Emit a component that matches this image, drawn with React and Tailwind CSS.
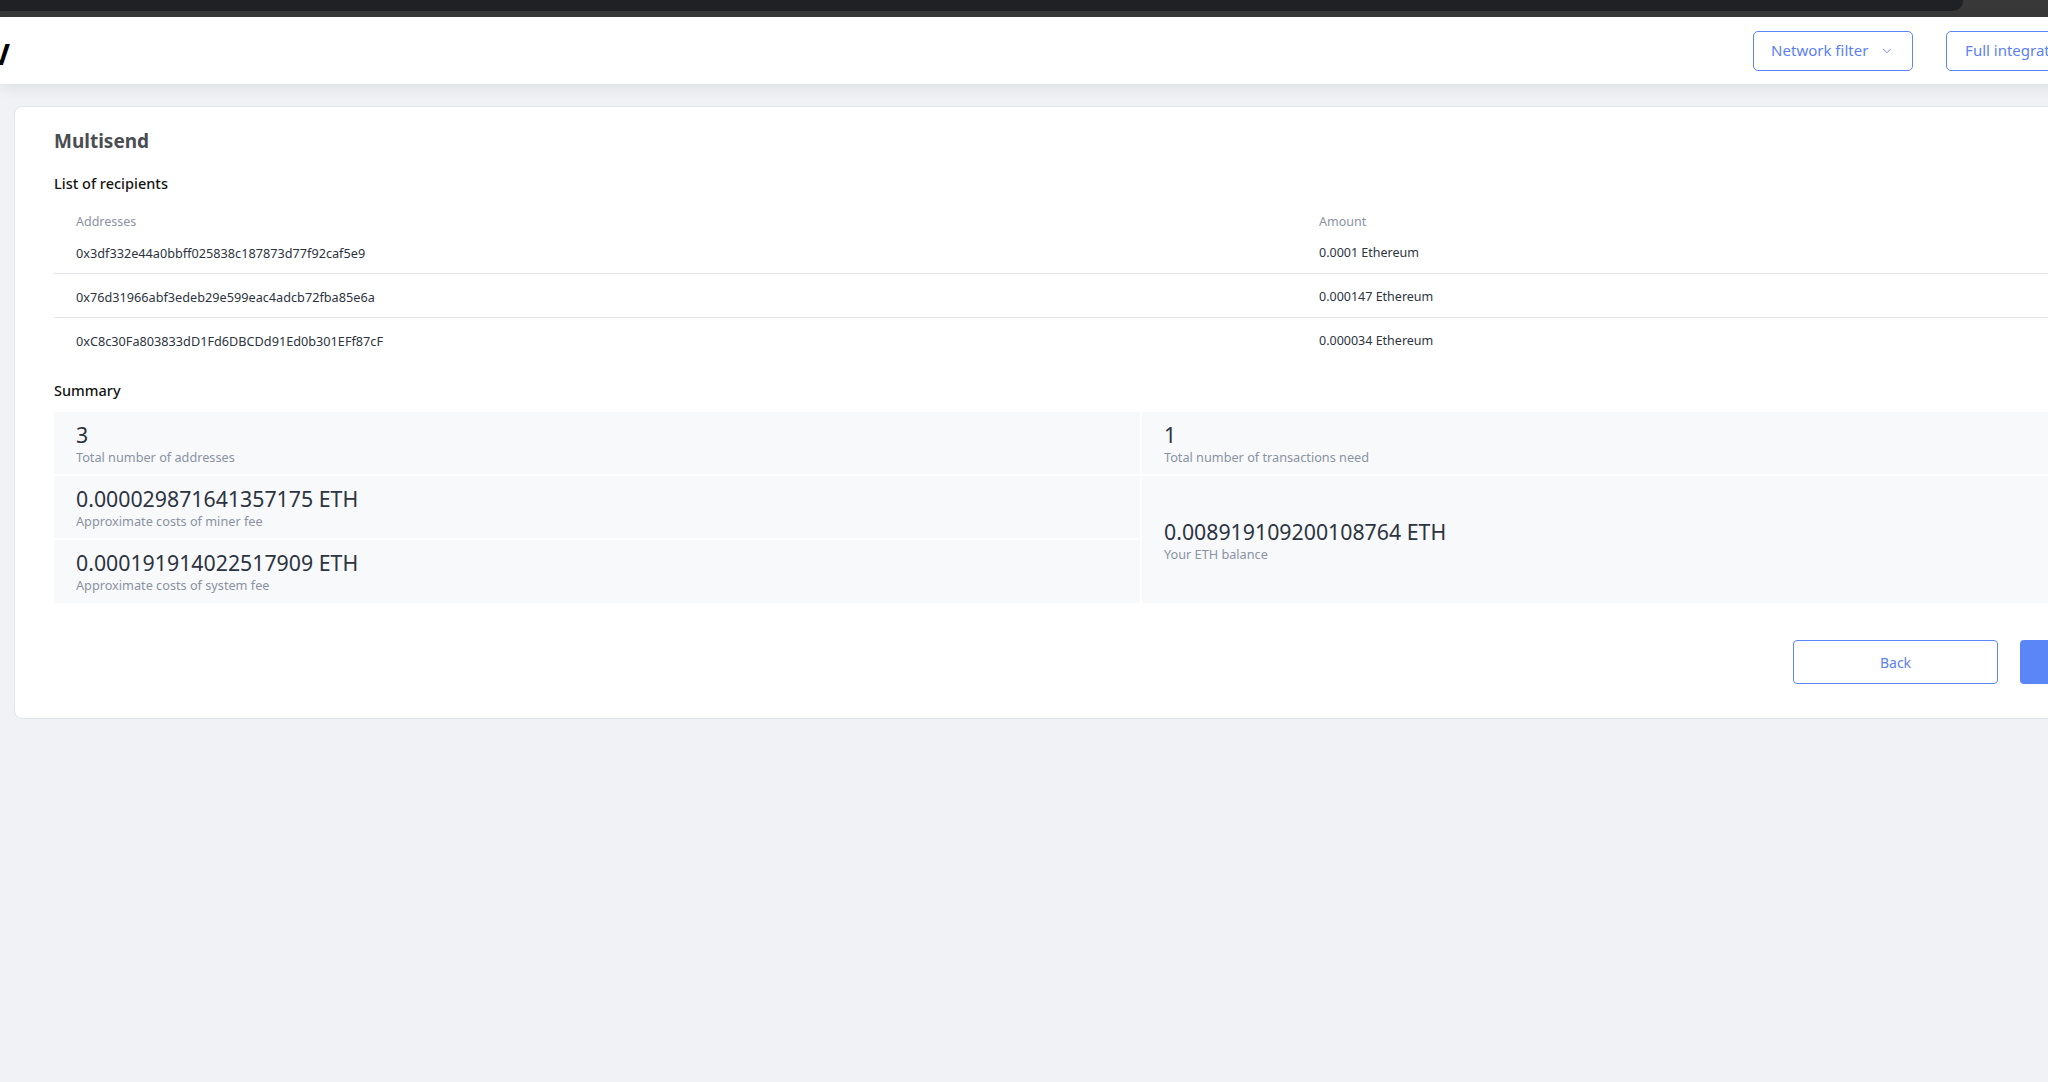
import React from "react";
import { ChevronDown } from "lucide-react";

const rows = [
  ["0x3df332e44a0bbff025838c187873d77f92caf5e9", "0.0001 Ethereum"],
  ["0x76d31966abf3edeb29e599eac4adcb72fba85e6a", "0.000147 Ethereum"],
  ["0xC8c30Fa803833dD1Fd6DBCDd91Ed0b301EFf87cF", "0.000034 Ethereum"],
];

function Stat({ value, label, className = "" }) {
  return (
    <div className={"bg-[#f8f9fb] pl-[22px] pt-[10px] pb-[8px] " + className}>
      <div className="text-[21.3px] leading-[26px] text-[#2c3441]">{value}</div>
      <div className="text-[12.7px] leading-[19px] text-[#8a93a3]">{label}</div>
    </div>
  );
}

export default function App() {
  return (
    <div
      className="w-[2048px] h-[1082px] overflow-hidden bg-[#f0f2f5]"
      style={{ fontFamily: '"Noto Sans", "Open Sans", Arial, sans-serif' }}
    >
      {/* browser chrome strip */}
      <div className="h-[17px] bg-[#383838] flex items-start">
        <div className="h-[11px] w-[1963px] bg-[#202124] rounded-br-[10px]" />
      </div>

      {/* header */}
      <div className="relative h-[67px] bg-white shadow-[0_3px_14px_rgba(30,40,60,0.09)] flex items-center w-[2115px] justify-between pr-[24px]">
        <div className="-ml-[9px] mt-[5px] text-[29px] font-bold text-black leading-none">V</div>
        <div className="flex items-center gap-[33px]">
          <button className="h-[40px] w-[160px] rounded-[5px] border border-[#5b87f6] text-[#5b7ff5] text-[15px] flex items-center pl-[17px] pr-[18px] justify-between bg-white">
            <span>Network filter</span>
            <ChevronDown size={14} strokeWidth={1.6} />
          </button>
          <button className="h-[40px] rounded-[5px] border border-[#5b87f6] text-[#5b7ff5] text-[15px] px-[18px] bg-white whitespace-nowrap">
            Full integration
          </button>
        </div>
      </div>

      {/* card */}
      <div className="mt-[22px] ml-[14px] w-[2255px] bg-white border border-[#e1e5eb] rounded-[8px] pl-[39px] pr-[40px] pt-[20px] pb-[34px]">
        <div className="text-[19px] leading-[28px] font-bold text-[#4a4d52]">Multisend</div>
        <div className="mt-[18px] text-[14.5px] leading-[20px] font-medium text-[#141414]">List of recipients</div>

        <div className="mt-[21px]">
          <div className="flex h-[16px] items-center text-[12.5px] text-[#8a93a3]">
            <div className="w-[1243px] pl-[22px]">Addresses</div>
            <div className="pl-[22px]">Amount</div>
          </div>
          {rows.map(([addr, amt], i) => (
            <div
              key={addr}
              className={
                "flex pt-[13px] text-[12.5px] leading-[20px] text-[#2d3440] " +
                (i < rows.length - 1 ? "h-[44px] border-b border-[#e3e6ec] pb-[10px]" : "h-[43px] pb-[10px]")
              }
            >
              <div className="w-[1243px] pl-[22px] text-[12.7px]">{addr}</div>
              <div className="pl-[22px]">{amt}</div>
            </div>
          ))}
        </div>

        <div className="mt-[19px] text-[14.5px] leading-[20px] font-medium text-[#141414]">Summary</div>

        <div className="mt-[12px] grid grid-cols-2 gap-[2px]">
          <div className="flex flex-col gap-[2px]">
            <Stat value="3" label="Total number of addresses" className="h-[62px]" />
            <Stat value="0.000029871641357175 ETH" label="Approximate costs of miner fee" className="h-[62px]" />
            <Stat value="0.000191914022517909 ETH" label="Approximate costs of system fee" className="h-[63px]" />
          </div>
          <div className="flex flex-col gap-[2px]">
            <Stat value="1" label="Total number of transactions need" className="h-[62px]" />
            <div className="flex-1 bg-[#f8f9fb] pl-[22px] pt-[4px] flex flex-col justify-center">
              <div className="text-[21.3px] leading-[26px] text-[#2c3441]">0.008919109200108764 ETH</div>
              <div className="text-[12.7px] leading-[19px] text-[#8a93a3]">Your ETH balance</div>
            </div>
          </div>
        </div>

        <div className="mt-[37px] flex justify-end gap-[22px]">
          <button className="h-[44px] w-[205px] rounded-[4px] border border-[#5b87f6] text-[#5b7ff5] text-[14px] bg-white">
            Back
          </button>
          <button className="h-[44px] w-[208px] rounded-[4px] bg-[#5a86f7] text-white text-[14px]">
            Send
          </button>
        </div>
      </div>
    </div>
  );
}
